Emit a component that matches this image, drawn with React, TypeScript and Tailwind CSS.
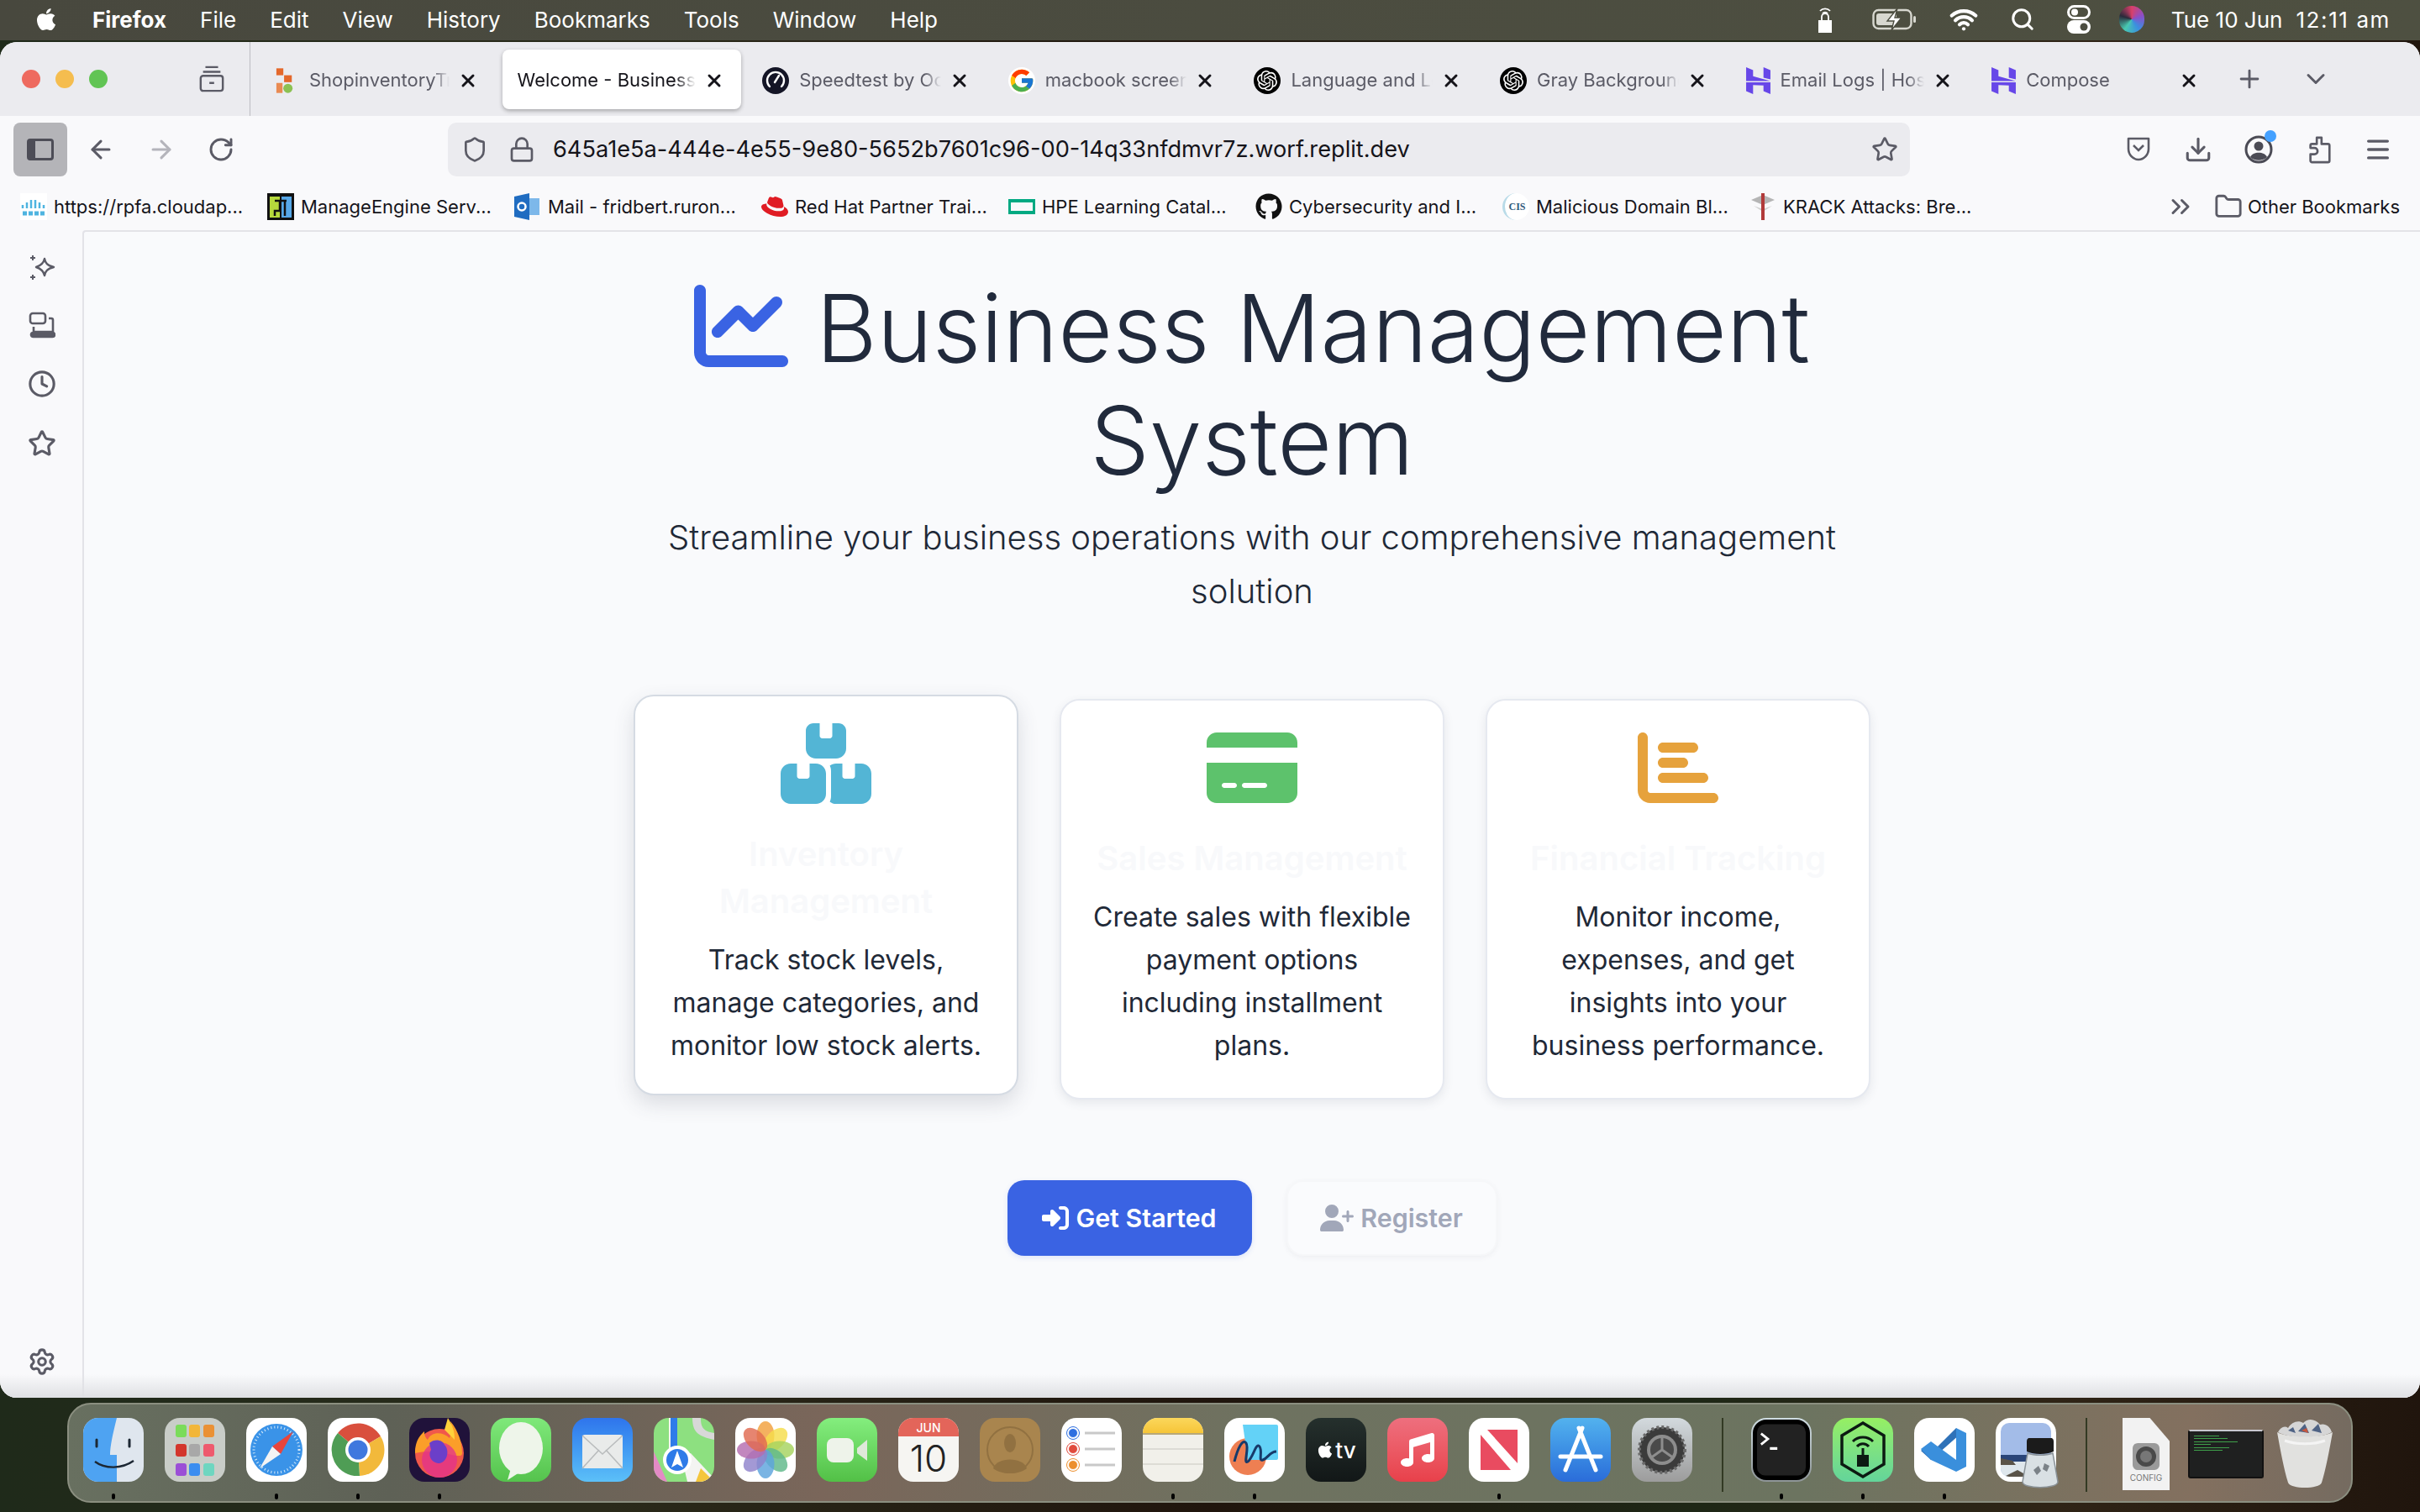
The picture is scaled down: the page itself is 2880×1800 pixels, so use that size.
import React from "react";
import {
  ArrowLeft,
  ArrowRight,
  ChevronDown,
  ChevronsRight,
  Clock,
  Download,
  Folder,
  Lock,
  Menu,
  Plus,
  Puzzle,
  RotateCw,
  Search,
  Settings,
  Shield,
  Star,
  Wifi,
  X,
} from "lucide-react";
import {
  FaApple,
  FaGithub,
  FaMusic,
  FaRedhat,
} from "react-icons/fa";
import {
  FaBoxesStacked,
  FaChartBar,
  FaChartLine,
  FaCreditCard,
  FaRightToBracket,
  FaUserPlus,
} from "react-icons/fa6";
import { FcGoogle } from "react-icons/fc";
import { SiOpenai } from "react-icons/si";

const Hostinger = () => (
  <svg viewBox="0 0 28 31" className="h-[32px] w-[29px] shrink-0" fill="#6747e8">
    <path d="M0 0L8 3.5V10.5L28 16H0z" />
    <path d="M20 0L28 3.5V14L20 12z" />
    <path d="M0 17.5H28V31L20 27.5V21L8 20.5V31L0 27.5z" />
  </svg>
);

const OpenAiDot = () => (
  <span className="flex h-[32px] w-[32px] shrink-0 items-center justify-center rounded-full bg-black">
    <SiOpenai className="text-[24px] text-white" />
  </span>
);

const ShopIcon = () => (
  <svg viewBox="0 0 24 34" className="mr-[6px] ml-[6px] h-[32px] w-[22px] shrink-0">
    <rect x="1" y="1" width="9" height="9" fill="#e4682b" />
    <rect x="11" y="10" width="10" height="9" fill="#e4682b" />
    <rect x="1" y="20" width="8" height="13" fill="#e98a52" />
    <circle cx="16" cy="27" r="6" fill="#8cc152" />
  </svg>
);

const SpeedIcon = () => (
  <svg viewBox="0 0 32 32" className="h-[32px] w-[32px] shrink-0">
    <circle cx="16" cy="16" r="16" fill="#141526" />
    <path d="M9 23a10 10 0 1 1 14 0" fill="none" stroke="#fff" strokeWidth="2.4" strokeLinecap="round" />
    <path d="M15 18l5-8" stroke="#fff" strokeWidth="2.4" strokeLinecap="round" />
  </svg>
);

const tabs = [
  { title: "ShopinventoryTracker", icon: <ShopIcon /> },
  { title: "Welcome - Business Management System", active: true },
  { title: "Speedtest by Ookla", icon: <SpeedIcon /> },
  { title: "macbook screenshot", icon: <FcGoogle className="shrink-0 rounded-full bg-white text-[32px]" /> },
  { title: "Language and Locale", icon: <OpenAiDot /> },
  { title: "Gray Background", icon: <OpenAiDot /> },
  { title: "Email Logs | Hostinger", icon: <Hostinger /> },
  { title: "Compose", icon: <Hostinger /> },
];

const bookmarks: { label: string; icon: React.ReactNode }[] = [
  {
    label: "https://rpfa.cloudap...",
    icon: (
      <svg viewBox="0 0 32 32" className="h-[32px] w-[32px] bg-white">
        <path d="M3 14v4M8 11v7M13 8v10M18 8v10M23 11v7M28 14v4" stroke="#4fb4e0" strokeWidth="2.5" />
        <path d="M3 24h26" stroke="#4fb4e0" strokeWidth="5" strokeDasharray="5 2" />
      </svg>
    ),
  },
  {
    label: "ManageEngine Serv...",
    icon: (
      <svg viewBox="0 0 32 32" className="h-[32px] w-[32px]">
        <rect width="32" height="32" fill="#111" />
        <rect x="3" y="4" width="12" height="25" fill="#b6d93c" />
        <rect x="17" y="4" width="12" height="25" fill="#57a8e8" />
        <path d="M9 9h14M15 9v12H9v6M21 9v18" stroke="#111" strokeWidth="2.5" fill="none" />
      </svg>
    ),
  },
  {
    label: "Mail - fridbert.ruron...",
    icon: (
      <svg viewBox="0 0 32 32" className="h-[32px] w-[32px]">
        <rect x="10" y="6" width="20" height="20" fill="#7db8ea" />
        <path d="M0 4l18-4v32L0 28z" fill="#1f6cc1" />
        <circle cx="9" cy="16" r="4.5" fill="none" stroke="#fff" strokeWidth="2.5" />
      </svg>
    ),
  },
  {
    label: "Red Hat Partner Trai...",
    icon: <FaRedhat className="text-[32px] text-[#e01c24]" />,
  },
  {
    label: "HPE Learning Catal...",
    icon: (
      <svg viewBox="0 0 32 32" className="h-[32px] w-[32px]">
        <rect x="1" y="9" width="30" height="14" fill="none" stroke="#01a982" strokeWidth="4" />
      </svg>
    ),
  },
  {
    label: "Cybersecurity and I...",
    icon: <FaGithub className="text-[32px] text-[#111]" />,
  },
  {
    label: "Malicious Domain Bl...",
    icon: (
      <span className="flex h-[32px] w-[32px] items-center justify-center rounded-full border-l-[3px] border-[#b9dbe8] bg-white text-[12px] font-bold text-[#2f5a7c] [font-family:'Liberation_Serif',serif]">
        CIS
      </span>
    ),
  },
  {
    label: "KRACK Attacks: Bre...",
    icon: (
      <svg viewBox="0 0 32 32" className="h-[32px] w-[32px]">
        <path d="M2 8l14-6 14 6-14 6z" fill="#b5b5b5" />
        <path d="M5 15l11 4 11-4-11 7z" fill="#cfcfcf" />
        <rect x="14" y="0" width="4" height="32" fill="#b13a3a" />
      </svg>
    ),
  },
];

const features = [
  {
    title: "Inventory Management",
    text: "Track stock levels, manage categories, and monitor low stock alerts.",
    icon: <FaBoxesStacked className="text-[108px] text-[#53b5d5]" />,
    hover: true,
  },
  {
    title: "Sales Management",
    text: "Create sales with flexible payment options including installment plans.",
    icon: <FaCreditCard className="text-[108px] text-[#5dc26c]" />,
  },
  {
    title: "Financial Tracking",
    text: "Monitor income, expenses, and get insights into your business performance.",
    icon: <FaChartBar className="text-[96px] text-[#e6a23c]" />,
  },
];

const MenuBar = () => (
  <div className="flex h-[48px] shrink-0 items-center justify-between bg-linear-to-r from-[#48483e] to-[#4e5041] pb-[2px] pl-[40px] pr-[35px] text-[26px] text-white">
    <div className="flex items-center gap-[40px]">
      <div className="flex items-center gap-[40px]">
        <FaApple className="text-[30px]" />
        <span className="font-bold">Firefox</span>
      </div>
      {["File", "Edit", "View", "History", "Bookmarks", "Tools", "Window", "Help"].map((m) => (
        <span key={m}>{m}</span>
      ))}
    </div>
    <div className="flex items-center">
      <svg viewBox="0 0 22 34" className="mr-[45px] h-[34px] w-[22px]" fill="none">
        <path d="M5 7a8 8 0 0 1 12 0M8 10a4 4 0 0 1 6 0" stroke="#fff" strokeWidth="1.8" />
        <path d="M7 18v-4a4 4 0 0 1 8 0v4" stroke="#fff" strokeWidth="1.8" />
        <rect x="3" y="18" width="16" height="15" fill="#fff" />
      </svg>
      <svg viewBox="0 0 54 30" className="mr-[38px] h-[30px] w-[54px]" fill="none">
        <rect x="1.5" y="4" width="45" height="22" rx="6" stroke="#d7d7cf" strokeWidth="2.4" />
        <rect x="5" y="8" width="24" height="14" rx="3" fill="#d7d7cf" />
        <path d="M30 2L18 17h8l-3 11 12-15h-8z" fill="#fff" stroke="#4c4d40" strokeWidth="1.4" />
        <rect x="49" y="11" width="3" height="8" rx="1.5" fill="#d7d7cf" />
      </svg>
      <Wifi className="mr-[38px] text-white" size={34} strokeWidth={3} />
      <Search className="mr-[38px] text-white" size={30} strokeWidth={2.4} />
      <svg viewBox="0 0 28 34" className="mr-[34px] h-[34px] w-[28px]">
        <rect x="1.5" y="1.5" width="25" height="14" rx="7" fill="none" stroke="#fff" strokeWidth="3" />
        <circle cx="9" cy="8.5" r="4" fill="#fff" />
        <rect y="18" width="28" height="16" rx="8" fill="#fff" />
        <circle cx="20" cy="26" r="4.5" fill="#4c4d40" />
      </svg>
      <span className="mr-[32px] h-[32px] w-[30px] rounded-full bg-[conic-gradient(#d9406a,#8a4fc9,#3a8fe0,#48c9b0,#2a2a3a,#d9406a)]" />
      <span>Tue 10 Jun</span>
      <span className="ml-[16px] tracking-[1.6px]">12:11 am</span>
    </div>
  </div>
);

const TabBar = () => (
  <div className="flex h-[88px] shrink-0 items-center bg-[#ebebef]">
    <div className="flex w-[297px] items-center pl-[26px]">
      <span className="h-[22px] w-[22px] rounded-full bg-[#ee6a5f]" />
      <span className="ml-[18px] h-[22px] w-[22px] rounded-full bg-[#f5bd4f]" />
      <span className="ml-[18px] h-[22px] w-[22px] rounded-full bg-[#61c454]" />
      <svg viewBox="0 0 32 34" className="ml-[108px] h-[32px] w-[32px]" fill="none" stroke="#5b5b66" strokeWidth="2.6">
        <path d="M8 2h16M5 8h22" />
        <rect x="2" y="13" width="28" height="19" rx="3" />
        <path d="M13 22h6" />
      </svg>
    </div>
    <div className="mr-[3px] h-[88px] w-px bg-[#bdbdc2]" />
    <div className="flex items-center">
      {tabs.map((t) => (
        <div
          key={t.title}
          className={
            t.active
              ? "mx-[4px] flex h-[71px] w-[284.6px] items-center rounded-[8px] bg-white pl-[18px] pr-[20px] pt-[3px] text-[#15141a] shadow-[0_2px_5px_rgba(0,0,0,0.3)]"
              : "flex h-[71px] w-[292.6px] items-center pl-[21px] pr-[25px] pt-[3px] text-[#5b5b66]"
          }
        >
          {t.icon}
          <span
            className={`min-w-0 flex-1 overflow-hidden whitespace-nowrap text-[22px] [mask-image:linear-gradient(to_right,black_88%,transparent)] ${
              t.icon ? "ml-[12px]" : ""
            }`}
          >
            {t.title}
          </span>
          <X className="ml-[10px] shrink-0 text-[#15141a]" size={24} strokeWidth={3} />
        </div>
      ))}
    </div>
    <Plus className="ml-[18px] text-[#5b5b66]" size={34} strokeWidth={2} />
    <ChevronDown className="ml-[44px] text-[#5b5b66]" size={36} strokeWidth={2} />
  </div>
);

const NavBar = () => (
  <div className="flex h-[80px] shrink-0 items-center bg-[#f9f9fb] pl-[16px] text-[#5b5b66]">
    <div className="flex h-[64px] w-[64px] items-center justify-center rounded-[8px] bg-[#b4b4b8]">
      <span className="h-[26px] w-[32px] rounded-[4px] border-[3px] border-l-[10px] border-[#4d4d57]" />
    </div>
    <ArrowLeft className="ml-[23px]" size={34} strokeWidth={2.2} />
    <ArrowRight className="ml-[38px] text-[#b4b4bb]" size={34} strokeWidth={2.2} />
    <RotateCw className="ml-[38px]" size={32} strokeWidth={2.2} />
    <div className="ml-[254px] flex h-[64px] w-[1740px] items-center rounded-[10px] bg-[#ebebef] pl-[16px] pr-[14px]">
      <Shield size={32} strokeWidth={2} />
      <Lock className="ml-[24px]" size={32} strokeWidth={2} />
      <span className="ml-[21px] flex-1 text-[27.2px] text-[#15141a]">
        645a1e5a-444e-4e55-9e80-5652b7601c96-00-14q33nfdmvr7z.worf.replit.dev
      </span>
      <Star size={32} strokeWidth={2} />
    </div>
    <svg viewBox="0 0 30 32" className="ml-[257px] h-[32px] w-[30px]" fill="none" stroke="#5b5b66" strokeWidth="2.6">
      <path d="M3 3h24v12a12 13 0 0 1-24 0z" strokeLinejoin="round" />
      <path d="M9 11l6 6 6-6" />
    </svg>
    <Download className="ml-[39px]" size={34} strokeWidth={2.2} />
    <div className="relative ml-[38px] h-[34px] w-[34px]">
      <svg viewBox="0 0 34 34" className="h-[34px] w-[34px]">
        <circle cx="17" cy="17" r="15" fill="none" stroke="#4b4b55" strokeWidth="3" />
        <circle cx="17" cy="13" r="5.5" fill="#4b4b55" />
        <path d="M7 26c3-7 17-7 20 0-5 5-15 5-20 0z" fill="#4b4b55" />
      </svg>
      <span className="absolute -right-[4px] -top-[6px] h-[14px] w-[14px] rounded-full bg-[#45a1ff]" />
    </div>
    <svg viewBox="0 0 30 36" className="ml-[40px] h-[34px] w-[30px]" fill="none" stroke="#5b5b66" strokeWidth="2.8" strokeLinejoin="round">
      <path d="M12 3h6v8h8a2 2 0 0 1 2 2v19a2 2 0 0 1-2 2H6a2 2 0 0 1-2-2v-8h5a4 4 0 0 0 0-8H4v-3a2 2 0 0 1 2-2h6z" />
    </svg>
    <Menu className="ml-[38px]" size={34} strokeWidth={2.4} />
  </div>
);

const BookmarksBar = () => (
  <div className="flex h-[56px] shrink-0 items-center bg-[#f9f9fb] pl-[24px] pr-[24px] text-[22px] text-[#15141a]">
    {bookmarks.map((b) => (
      <div key={b.label} className="flex w-[294px] items-center gap-[8px] whitespace-nowrap">
        {b.icon}
        <span>{b.label}</span>
      </div>
    ))}
    <div className="ml-auto flex items-center">
      <ChevronsRight className="text-[#5b5b66]" size={36} strokeWidth={2} />
      <Folder className="ml-[22px] text-[#5b5b66]" size={34} strokeWidth={2} />
      <span className="ml-[6px] whitespace-nowrap">Other Bookmarks</span>
    </div>
  </div>
);

const SideBar = () => (
  <div className="flex w-[98px] shrink-0 flex-col items-center justify-between bg-[#f9f9fb] pb-[26px] pl-[2px] pt-[28px] text-[#5b5b66]">
    <div className="flex flex-col items-center gap-[37px]">
      <svg viewBox="0 0 32 32" className="h-[32px] w-[32px]" fill="none" stroke="#5b5b66" strokeWidth="2.4" strokeLinejoin="round">
        <path d="M19 6c1 5 3 8 11 10-8 2-10 5-11 10-1-5-4-8-10-10 6-2 9-5 10-10z" />
        <path d="M5 2v6M2 5h6M5 25v6M2 28h6" strokeWidth="2" />
      </svg>
      <svg viewBox="0 0 32 32" className="h-[32px] w-[32px]" fill="none" stroke="#5b5b66" strokeWidth="2.6">
        <rect x="2" y="2" width="18" height="12" rx="3" />
        <path d="M24 8h3a2 2 0 0 1 2 2v14H6v-6" />
        <rect x="3" y="25" width="28" height="5" rx="2.5" fill="#5b5b66" />
      </svg>
      <Clock size={34} strokeWidth={2.2} />
      <Star size={34} strokeWidth={2.2} />
    </div>
    <Settings size={34} strokeWidth={2.2} />
  </div>
);

const FeatureCard = ({ f }: { f: (typeof features)[number] }) => (
  <div
    className={`flex w-[458px] flex-col items-center rounded-[24px] border-2 bg-white px-[32px] pb-[32px] pt-[32px] text-center ${
      f.hover
        ? "-translate-y-[5px] border-[#d5dbe3] shadow-[0_10px_24px_rgba(60,70,90,0.16)]"
        : "border-[#e6e9f0] shadow-[0_4px_12px_rgba(60,70,90,0.10)]"
    }`}
  >
    <div className="mb-[32px] flex h-[96px] items-center">{f.icon}</div>
    <h3 className="mb-[16px] text-[40px] font-semibold leading-[56px] text-[#f8f9fb]">{f.title}</h3>
    <p className="text-[32px] leading-[51.2px] text-[#1f2937]">{f.text}</p>
  </div>
);

const Landing = () => (
  <main className="flex flex-1 flex-col items-center rounded-tl-[4px] border-l-2 border-t-2 border-[#e3e3e8] bg-[#f9fafc] pt-[47px]">
    <div className="flex w-[1474px] flex-col items-center text-center">
      <h1 className="mb-[16px] w-[1400px] text-[112px] font-light leading-[134.4px] tracking-[-0.1px] text-[#212a3c]">
        <FaChartLine className="mr-[33px] inline-block align-[-13px] text-[#3a63e3]" />
        Business Management System
      </h1>
      <p className="w-[1400px] text-[40px] font-light leading-[64px] text-[#1f2937]">
        Streamline your business operations with our comprehensive management solution
      </p>
      <div className="mt-[96px] flex items-stretch gap-[49px]">
        {features.map((f) => (
          <FeatureCard key={f.title} f={f} />
        ))}
      </div>
      <div className="mt-[96px] flex items-center gap-[41px]">
        <button className="flex h-[90px] w-[291px] items-center justify-center gap-[8px] rounded-[20px] bg-[#3a63e3] text-[30.4px] font-semibold text-white shadow-[0_2px_6px_rgba(58,99,227,0.15)]">
          <FaRightToBracket className="text-[32px]" />
          Get Started
        </button>
        <button className="flex h-[90px] w-[251px] items-center justify-center gap-[8px] rounded-[20px] border-2 border-[#f6f7f9] bg-[#fafbfd] text-[30.4px] font-semibold text-[#a1a7b9] shadow-[0_2px_6px_rgba(60,70,90,0.06)]">
          <FaUserPlus className="text-[40px]" />
          Register
        </button>
      </div>
    </div>
  </main>
);

// dock art, all drawn on the same 72x76 box
const Art = ({ children }: { children: React.ReactNode }) => (
  <svg viewBox="0 0 72 76" className="h-full w-full">
    {children}
  </svg>
);

const tile = "h-[76px] w-[72px] overflow-hidden rounded-[18px]";

const Finder = () => (
  <div className={`${tile} bg-[#dfe6ee]`}>
    <Art>
      <path d="M0 0h40c-5 20-8 34-8 44h8v32H0z" className="fill-[#4ea3f2]" />
      <path d="M16 26v8M55 26v8" stroke="#1c2733" strokeWidth="3" strokeLinecap="round" />
      <path d="M14 52c12 9 32 9 46-1" stroke="#1c2733" strokeWidth="2.4" fill="none" />
    </Art>
  </div>
);

const Launchpad = () => (
  <div className={`${tile} grid grid-cols-3 content-center justify-items-center gap-y-[8px] bg-[#c9cdc8] px-[11px]`}>
    {["bg-[#7bdc5a]", "bg-[#f2b638]", "bg-[#ea9135]", "bg-[#d3362c]", "bg-[#a8a8a8]", "bg-[#ee5a6e]", "bg-[#9b4fd6]", "bg-[#3b8df0]", "bg-[#6ed6c0]"].map((c) => (
      <span key={c} className={`h-[15px] w-[13px] rounded-[3px] ${c}`} />
    ))}
  </div>
);

const Safari = () => (
  <div className={`${tile} bg-white`}>
    <Art>
      <circle cx="36" cy="38" r="31" fill="#3a93e8" />
      <circle cx="36" cy="38" r="27" fill="none" stroke="#d6ebfa" strokeWidth="3" strokeDasharray="1 3" />
      <path d="M56 16L31 34l10 9z" fill="#e8453c" />
      <path d="M16 60l15-26 10 9z" fill="#f4f4f4" />
    </Art>
  </div>
);

const Chrome = () => (
  <div className={`${tile} bg-white`}>
    <Art>
      <path d="M36 38L12 18a31 31 0 0 1 51 4z" fill="#d94f3d" />
      <path d="M36 38l27-16a31 31 0 0 1-25 47z" fill="#f2b93b" />
      <path d="M36 38L38 69A31 31 0 0 1 12 18z" fill="#4f9d55" />
      <circle cx="36" cy="38" r="15" fill="#fff" />
      <circle cx="36" cy="38" r="11.5" fill="#3f78de" />
    </Art>
  </div>
);

const Firefox = () => (
  <div className={`${tile} bg-[#20123a]`}>
    <Art>
      <circle cx="36" cy="42" r="29" fill="#f0584b" />
      <path d="M7 42C7 26 14 20 18 16c0 6 2 8 4 10 4-10 18-10 26-2 3-8 2-14 1-20 10 12 14 26 14 38 0 10-27-8-56 0z" fill="#fb9e29" />
      <circle cx="36" cy="50" r="21" fill="#e3308e" opacity="0.75" />
      <path d="M24 30c6-6 16-4 18 2 6 6 4 20-6 22-10 0-14-10-10-16z" fill="#6b3fc9" />
      <path d="M46 0c6 10 8 16 8 26L42 14z" fill="#ffd23b" />
    </Art>
  </div>
);

const Messages = () => (
  <div className={`${tile} bg-linear-to-b from-[#7fe97a] to-[#55c34d]`}>
    <Art>
      <ellipse cx="36" cy="36" rx="26" ry="31" fill="#eef5ea" />
      <path d="M24 60l-4 14 14-9z" fill="#eef5ea" />
    </Art>
  </div>
);

const Mail = () => (
  <div className={`${tile} bg-linear-to-b from-[#2f74ec] to-[#5cc0f8]`}>
    <Art>
      <rect x="12" y="20" width="48" height="40" rx="3" fill="#e9ebea" />
      <path d="M12 21l24 22 24-22M12 60l20-22M60 60L40 38" stroke="#b9bcbd" strokeWidth="1.6" fill="none" />
    </Art>
  </div>
);

const Maps = () => (
  <div className={`${tile} bg-[#8de080]`}>
    <Art>
      <path d="M0 40l16 36H0z" fill="#e38ac5" />
      <path d="M18 0h10v40H18zM40 76l-8-34h12l28 30v4z" fill="#f4f4f2" />
      <path d="M20 0h8v38h-8z" fill="#2e7be8" />
      <path d="M50 76l6-16 16 16z" fill="#f4c63c" />
      <path d="M46 0c0 18 8 22 26 26v-8C58 16 56 10 56 0z" fill="#d8d8d8" />
      <circle cx="28" cy="50" r="17" fill="#fff" />
      <circle cx="28" cy="50" r="13" fill="#2e7be8" />
      <path d="M28 39l7 20-7-4-7 4z" fill="#fff" />
    </Art>
  </div>
);

const Photos = () => (
  <div className={`${tile} bg-white`}>
    <Art>
      {["#f2a03d", "#f5dd4c", "#a6d35e", "#5fb88a", "#5da3dd", "#8f83cc", "#b56cb0", "#e06a50"].map((c, i) => (
        <ellipse key={c} cx="36" cy="21" rx="10.5" ry="17" fill={c} opacity="0.82" transform={`rotate(${i * 45} 36 38)`} />
      ))}
    </Art>
  </div>
);

const FaceTime = () => (
  <div className={`${tile} bg-linear-to-b from-[#84ee7e] to-[#52c046]`}>
    <Art>
      <rect x="12" y="24" width="32" height="29" rx="8" fill="#eef3ea" />
      <path d="M48 36l12-10v25L48 42z" fill="#dfe8da" />
    </Art>
  </div>
);

const Calendar = () => (
  <div className={`${tile} flex flex-col bg-[#f6f5f2]`}>
    <div className="flex h-[22px] items-center justify-center bg-[#e3655a] text-[14px] font-medium text-white">JUN</div>
    <div className="flex-1 text-center text-[44px] font-light leading-[52px] text-[#222]">10</div>
  </div>
);

const Contacts = () => (
  <div className={`${tile} bg-[#a9854e]`}>
    <Art>
      <circle cx="36" cy="38" r="27" fill="none" stroke="#917141" strokeWidth="2" />
      <ellipse cx="36" cy="30" rx="7" ry="11" fill="#917141" />
      <path d="M16 60c4-14 36-14 40 0-10 8-30 8-40 0z" fill="#917141" />
    </Art>
  </div>
);

const Reminders = () => (
  <div className={`${tile} bg-white`}>
    <Art>
      {[
        { y: 18, c: "#2f6fe0" },
        { y: 37, c: "#e14b3d" },
        { y: 56, c: "#ec8f2e" },
      ].map((r) => (
        <g key={r.y}>
          <circle cx="14" cy={r.y} r="5.5" fill={r.c} stroke="#fff" strokeWidth="1" />
          <circle cx="14" cy={r.y} r="7.5" fill="none" stroke={r.c} strokeWidth="1" />
          <rect x="28" y={r.y - 1.5} width="36" height="3" fill="#c9c9c9" />
        </g>
      ))}
    </Art>
  </div>
);

const Notes = () => (
  <div className={`${tile} flex flex-col bg-[#f1f0ea]`}>
    <div className="h-[20px] border-b-2 border-[#b8a878] bg-linear-to-b from-[#fbd75b] to-[#f6c536]" />
    <div className="mt-[16px] h-[2px] bg-[#dddcd5]" />
    <div className="mt-[16px] h-[2px] bg-[#dddcd5]" />
  </div>
);

const Freeform = () => (
  <div className={`${tile} bg-white`}>
    <Art>
      <circle cx="28" cy="46" r="22" fill="#ee7f52" />
      <path d="M22 8h40a2 2 0 0 1 2 2v38a2 2 0 0 1-2 2H28z" fill="#63d2f7" />
      <path d="M12 52c4-16 10-28 14-22s-4 26 2 22 10-24 14-18-2 18 4 16 8-10 16-10" fill="none" stroke="#173a6a" strokeWidth="3" />
    </Art>
  </div>
);

const AppleTv = () => (
  <div className={`${tile} flex items-center justify-center gap-[1px] bg-linear-to-b from-[#25302d] to-[#121717] text-white`}>
    <FaApple className="text-[22px]" />
    <span className="text-[26px] font-medium">tv</span>
  </div>
);

const Music = () => (
  <div className={`${tile} flex items-center justify-center bg-linear-to-b from-[#ee6f7e] to-[#e8404a]`}>
    <FaMusic className="text-[40px] text-white" />
  </div>
);

const News = () => (
  <div className={`${tile} bg-white`}>
    <Art>
      <rect x="14" y="14" width="44" height="48" fill="#e94b60" />
      <path d="M14 14h8l36 40v8h-8L14 20z" fill="#fff" />
    </Art>
  </div>
);

const AppStore = () => (
  <div className={`${tile} bg-linear-to-b from-[#53b2ee] to-[#2b6cd9]`}>
    <Art>
      <path d="M38 12L18 62M34 12l20 50" stroke="#fff" strokeWidth="5" strokeLinecap="round" />
      <path d="M12 46h48" stroke="#fff" strokeWidth="5" strokeLinecap="round" />
    </Art>
  </div>
);

const SystemSettings = () => (
  <div className={`${tile} bg-linear-to-b from-[#d3dade] to-[#9c9c9c]`}>
    <Art>
      <circle cx="36" cy="38" r="27" fill="#3b3b3b" />
      <circle cx="36" cy="38" r="27" fill="none" stroke="#6b6b6b" strokeWidth="4" strokeDasharray="3 3" />
      <circle cx="36" cy="38" r="18" fill="#8d8d8d" />
      <circle cx="36" cy="38" r="14" fill="#4a4a4a" />
      <path d="M36 38V22M36 38L22 48M36 38l14 10" stroke="#8d8d8d" strokeWidth="3" />
    </Art>
  </div>
);

const TerminalApp = () => (
  <div className={`${tile} bg-linear-to-b from-[#cfdde2] to-[#8e9597] p-[2px]`}>
    <div className="h-full rounded-[16px] bg-black p-[5px]">
      <Art>
        <rect x="0" y="0" width="72" height="76" rx="12" fill="#222" />
        <path d="M6 14l10 8-10 8" stroke="#fff" strokeWidth="3.5" fill="none" />
        <rect x="19" y="34" width="11" height="4" fill="#fff" />
      </Art>
    </div>
  </div>
);

const VpnApp = () => (
  <div className={`${tile} bg-linear-to-b from-[#96ef62] to-[#63d49a]`}>
    <Art>
      <path d="M36 6l25 15v34L36 70 11 55V21z" fill="none" stroke="#0c1a12" strokeWidth="3.5" />
      <path d="M24 28a17 17 0 0 1 24 0M29 34a9 9 0 0 1 14 0" fill="none" stroke="#0c1a12" strokeWidth="3" />
      <path d="M36 36v8" stroke="#0c1a12" strokeWidth="3" />
      <rect x="29" y="44" width="14" height="14" fill="#0c1a12" />
    </Art>
  </div>
);

const VsCode = () => (
  <div className={`${tile} bg-white`}>
    <Art>
      <path d="M50 12L20 42l-8-6-4 3 12 11 34-30z" fill="#2f72b8" />
      <path d="M50 12l12 6v40l-12 6z" fill="#3a8fdc" />
      <path d="M8 37l12 13 30 14V50L20 28z" fill="#3a8fdc" />
    </Art>
  </div>
);

const Preview = () => (
  <div className="relative h-[76px] w-[72px]">
    <div className={`${tile} bg-white p-[6px]`}>
      <svg viewBox="0 0 60 64" className="h-full w-full rounded-[10px]">
        <rect width="60" height="64" fill="#a3bce8" />
        <rect y="38" width="60" height="10" fill="#2a4578" />
        <rect y="46" width="60" height="18" fill="#dfe7ec" />
        <path d="M0 42l14 3 4 5H0zM4 64l16-8 14 8z" fill="#5a5348" />
      </svg>
    </div>
    <svg viewBox="0 0 44 62" className="absolute -bottom-[8px] -right-[3px] h-[62px] w-[44px]">
      <path d="M8 2h28a4 4 0 0 1 2 4v12c-8 4-24 4-32 0V6a4 4 0 0 1 2-4z" fill="#1b1b1b" />
      <path d="M7 20c8 3 22 3 30 0l6 34c0 9-42 9-42 0z" fill="#d9e0e4" stroke="#8a9298" strokeWidth="1.5" />
      <path d="M14 40l6-5 3 6-5 5zM27 32l6 3-3 7-5-3z" fill="#7b8288" />
    </svg>
  </div>
);

const Config = () => (
  <div className="flex h-[86px] w-[56px] flex-col items-center bg-[#f2f2f2] pt-[30px] [clip-path:polygon(0_0,58%_0,100%_32%,100%_100%,0_100%)]">
    <span className="flex h-[32px] w-[32px] items-center justify-center rounded-[6px] bg-[#9a9a9a]">
      <span className="h-[24px] w-[24px] rounded-full border-[5px] border-[#4a4a4a] bg-[#777]" />
    </span>
    <span className="mt-[2px] text-[10px] leading-[14px] text-[#777]">CONFIG</span>
  </div>
);

const Shot = () => (
  <div className="h-[58px] w-[90px] rounded-[3px] border-2 border-t-[#c8c8d0] border-x-[#111] border-b-[#111] bg-[#1f2020] p-[5px]">
    <div className="h-[1px] w-[30px] bg-[#3fa04a]" />
    <div className="mt-[2px] h-[1px] w-[40px] bg-[#3fa04a]" />
    <div className="mt-[3px] h-[1px] w-[52px] bg-[#3fa04a]" />
    <div className="mt-[2px] h-[1px] w-[20px] bg-[#3fa04a]" />
    <div className="mt-[3px] h-[1px] w-[42px] bg-[#3fa04a]" />
    <div className="mt-[2px] h-[1px] w-[34px] bg-[#3fa04a]" />
  </div>
);

const Trash = () => (
  <svg viewBox="0 0 68 84" className="h-[84px] w-[68px]">
    <path d="M2 16c3-6 8-8 12-5 4-7 12-10 18-6 6-6 14-5 20 2 6-2 12 2 14 9-16 8-48 8-64 0z" fill="#d6d6d6" />
    <path d="M26 15l8-9 5 11zM42 14l8-8 4 11zM14 14l6-4 3 7z" fill="#4f6385" />
    <path d="M30 14l6-3 2 6z" fill="#c7563d" />
    <path d="M1 16c4 22 8 44 13 60 3 8 37 8 40 0 5-16 9-38 13-60-12 7-54 7-66 0z" fill="#e1e1df" />
    <path d="M10 26c14 5 34 5 48 0" fill="none" stroke="#f4f4f4" strokeWidth="3" />
  </svg>
);

const Dot = () => <span className="absolute left-1/2 top-[90px] h-[7px] w-[4px] -translate-x-1/2 rounded-full bg-black" />;

const DockItem = ({ children, running }: { children: React.ReactNode; running?: boolean }) => (
  <div className="relative flex h-[76px] w-[72px] shrink-0 items-center justify-center">
    {children}
    {running && <Dot />}
  </div>
);

const Separator = () => <div className="h-[88px] w-[2px] shrink-0 bg-[#333a24]" />;

const Dock = () => (
  <div className="ml-[80px] mt-[6px] flex h-[119px] w-[2720px] items-start rounded-[28px] border-2 border-[#8b8f80] bg-[linear-gradient(90deg,#687060_0%,#5e6156_14%,#7a665a_33%,#6e7260_52%,#6c7460_76%,#83705f_93%,#756b60_100%)] pl-[17px] pt-[16px]">
    <div className="flex gap-[25px]">
      <DockItem running><Finder /></DockItem>
      <DockItem><Launchpad /></DockItem>
      <DockItem running><Safari /></DockItem>
      <DockItem running><Chrome /></DockItem>
      <DockItem running><Firefox /></DockItem>
      <DockItem><Messages /></DockItem>
      <DockItem><Mail /></DockItem>
      <DockItem><Maps /></DockItem>
      <DockItem><Photos /></DockItem>
      <DockItem><FaceTime /></DockItem>
      <DockItem><Calendar /></DockItem>
      <DockItem><Contacts /></DockItem>
      <DockItem><Reminders /></DockItem>
      <DockItem running><Notes /></DockItem>
      <DockItem running><Freeform /></DockItem>
      <DockItem><AppleTv /></DockItem>
      <DockItem><Music /></DockItem>
      <DockItem running><News /></DockItem>
      <DockItem><AppStore /></DockItem>
      <DockItem><SystemSettings /></DockItem>
    </div>
    <div className="ml-[35px] mr-[33px]"><Separator /></div>
    <div className="flex gap-[25px]">
      <DockItem running><TerminalApp /></DockItem>
      <DockItem running><VpnApp /></DockItem>
      <DockItem running><VsCode /></DockItem>
      <DockItem><Preview /></DockItem>
    </div>
    <div className="ml-[35px] mr-[42px]"><Separator /></div>
    <div className="flex items-center">
      <Config />
      <div className="ml-[22px] mr-[15px]"><Shot /></div>
      <Trash />
    </div>
  </div>
);

export default function App() {
  return (
    <div className="flex h-[1800px] w-[2880px] flex-col overflow-hidden bg-[linear-gradient(90deg,#1f2a1a_0%,#2a2a1a_25%,#20150d_50%,#1e2716_70%,#2f2416_85%,#20150d_100%)] [font-family:Inter,sans-serif]">
      <MenuBar />
      <div className="relative mt-[2px] flex h-[1614px] shrink-0 flex-col overflow-hidden rounded-[20px] bg-[#f9f9fb]">
        <TabBar />
        <NavBar />
        <BookmarksBar />
        <div className="flex min-h-0 flex-1">
          <SideBar />
          <Landing />
        </div>
        {/* dock shadow falling over the bottom of the window */}
        <div className="pointer-events-none absolute inset-x-0 bottom-0 h-[28px] bg-linear-to-b from-transparent to-[#dfe0e3]" />
      </div>
      <Dock />
    </div>
  );
}
